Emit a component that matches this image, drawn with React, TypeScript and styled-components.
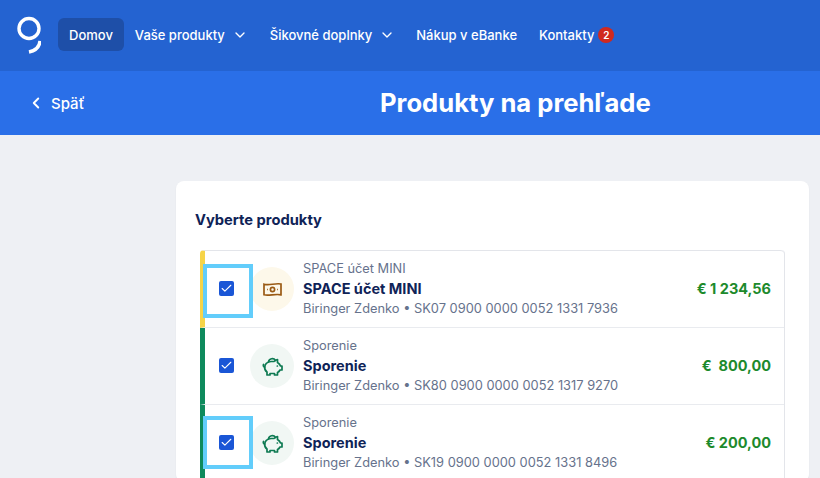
import React from 'react';
import styled, { createGlobalStyle } from 'styled-components';
import { Check, ChevronDown, ChevronLeft } from 'lucide-react';

const GlobalStyle = createGlobalStyle`
    html, body {
        margin: 0;
        padding: 0;
        background: #eef0f4;
        font-family: Inter, "Liberation Sans", sans-serif;
    }
`;

const Page = styled.div`
    width: 820px;
    height: 478px;
    overflow: hidden;
`;

const TopBar = styled.header`
    height: 71px;
    box-sizing: border-box;
    padding: 16px 0 0 17px;
    display: flex;
    align-items: flex-start;
    background: #2463d1;
`;

const Nav = styled.nav`
    display: flex;
    align-items: center;
    margin: 2px 0 0 17px;
`;

const NavItem = styled.a<{ $active?: boolean; $gap?: number }>`
    display: flex;
    align-items: center;
    height: 33px;
    padding: 0 11px;
    margin-right: ${({ $gap }) => $gap ?? 0}px;
    border-radius: 6px;
    font-size: 13px;
    font-weight: 500;
    color: #fff;
    white-space: nowrap;
    background: ${({ $active }) => ($active ? '#1e4fa8' : 'transparent')};
`;

const NavChevron = styled(ChevronDown)`
    margin-left: 7px;
    color: #fff;
`;

const Badge = styled.span`
    display: inline-flex;
    align-items: center;
    justify-content: center;
    width: 16px;
    height: 16px;
    margin-left: 4px;
    border-radius: 50%;
    background: #d0291f;
    color: #fff;
    font-size: 10px;
    font-weight: 600;
`;

const SubBar = styled.div`
    height: 64px;
    box-sizing: border-box;
    padding-left: 27px;
    display: flex;
    align-items: center;
    background: #2a6fe8;
    color: #fff;
`;

const BackLink = styled.a`
    display: flex;
    align-items: center;
    gap: 6px;
    width: 353px;
    font-size: 15px;
    font-weight: 500;
`;

const Title = styled.h1`
    margin: 0;
    font-size: 25.6px;
    line-height: 32px;
    font-weight: 700;
    white-space: nowrap;
`;

const Main = styled.main`
    padding: 46px 11px 0 176px;
`;

const Card = styled.section`
    padding: 30px 24px 0 19px;
    background: #fff;
    border-radius: 8px;
    box-shadow: 0 1px 2px rgba(20, 30, 60, 0.05);
`;

const CardTitle = styled.h2`
    margin: 0 0 21px;
    font-size: 14.7px;
    line-height: 18px;
    font-weight: 700;
    color: #0f2357;
`;

const List = styled.div`
    margin-left: 5px;
    border-right: 1px solid #e3e5ea;
    border-radius: 4px 4px 0 0;
`;

const Row = styled.div<{ $stripe: string }>`
    position: relative;
    display: flex;
    align-items: center;
    height: 77px;
    box-sizing: border-box;
    padding-right: 13px;
    border-left: 5px solid ${({ $stripe }) => $stripe};
    border-bottom: 1px solid #e9ebef;

    &:first-child {
        height: 78px;
        border-top: 1px solid #e3e5ea;
        border-radius: 4px 4px 0 0;
    }
`;

const CheckBox = styled.span`
    display: flex;
    align-items: center;
    justify-content: center;
    flex-shrink: 0;
    width: 15px;
    height: 15px;
    margin: 0 0 2px 14px;
    border-radius: 2px;
    background: #1a56d6;
    color: #fff;
`;

const Highlight = styled.span<{ $top: number; $height: number }>`
    position: absolute;
    left: -2px;
    top: ${({ $top }) => $top}px;
    width: 50px;
    height: ${({ $height }) => $height}px;
    box-sizing: border-box;
    border: 4px solid #62cdfb;
`;

const IconCircle = styled.span<{ $bg: string; $color: string }>`
    display: flex;
    align-items: center;
    justify-content: center;
    flex-shrink: 0;
    width: 44px;
    height: 44px;
    margin-left: 16px;
    border-radius: 50%;
    background: ${({ $bg }) => $bg};
    color: ${({ $color }) => $color};
`;

const Info = styled.div`
    flex: 1;
    min-width: 0;
    margin-left: 9px;
`;

const Kind = styled.div`
    font-size: 12.8px;
    line-height: 18px;
    color: #66728c;
`;

const Name = styled.div`
    font-size: 14.5px;
    line-height: 21px;
    font-weight: 700;
    color: #0f2357;
`;

const Account = styled.div`
    font-size: 12.85px;
    line-height: 19px;
    color: #66728c;
    white-space: nowrap;
`;

const Amount = styled.div`
    margin-bottom: 2px;
    font-size: 14.5px;
    font-weight: 700;
    color: #1d8a2c;
    white-space: pre;
`;

const LogoMark = () => (
    <svg width="24" height="38" viewBox="0 0 24 38" fill="none" stroke="#fff" strokeWidth="3.4">
        <circle cx="12" cy="12.5" r="10" />
        <path d="M23 25 C22.5 31 19 34.5 12 36" />
    </svg>
);

const BanknoteIcon = () => (
    <svg width="19" height="15" viewBox="0 0 19 15" fill="none" stroke="currentColor" strokeWidth="1.7">
        <path d="M1 2.2 C6 4 12 0.8 18 2 V12.8 C12 11.5 6 14.2 1 12.8 Z" />
        <circle cx="9.5" cy="7.5" r="2.1" />
        <path d="M4 7.5h.8M14.2 7.5h.8" />
    </svg>
);

const PiggyIcon = () => (
    <svg width="21" height="20" viewBox="0 0 21 20" fill="none" stroke="currentColor" strokeWidth="1.7" strokeLinejoin="round" strokeLinecap="round">
        <path d="M15.5 3.5 V6.5 C17 7.5 18 8.5 18.5 10 H20 V14 H18 C17.5 15 16.5 16 15.5 16.5 V19 H12.5 V17.5 H8 V19 H5 V16 C3.5 15 2.5 13 2.7 11 C2.9 8.5 5 6 9 5.5 H12 C13 4.5 14 3.8 15.5 3.5 Z" />
        <path d="M2.7 11 C1.5 10.8 1 9.5 1.5 8.5" />
        <path d="M6.5 5.8 A3.8 3.8 0 0 1 13.5 4.5" />
        <path d="M15.3 10h.1" />
    </svg>
);

const rows = [
    { kind: 'SPACE účet MINI', name: 'SPACE účet MINI', iban: 'SK07 0900 0000 0052 1331 7936', amount: '€ 1 234,56', stripe: '#f6d448', bg: '#fdf8ea', color: '#9a5a14', money: true, marker: { top: 13, height: 54 } },
    { kind: 'Sporenie', name: 'Sporenie', iban: 'SK80 0900 0000 0052 1317 9270', amount: '€  800,00', stripe: '#0e8a5c', bg: '#f1f7f4', color: '#0e7a52', money: false },
    { kind: 'Sporenie', name: 'Sporenie', iban: 'SK19 0900 0000 0052 1331 8496', amount: '€ 200,00', stripe: '#0e8a5c', bg: '#f1f7f4', color: '#0e7a52', money: false, marker: { top: 11, height: 53 } },
];

const App: React.FC = () => (
    <Page>
        <GlobalStyle />
        <TopBar>
            <LogoMark />
            <Nav>
                <NavItem $active>Domov</NavItem>
                <NavItem>Vaše produkty<NavChevron size={16} /></NavItem>
                <NavItem $gap={-1}>Šikovné doplnky<NavChevron size={16} /></NavItem>
                <NavItem>Nákup v eBanke</NavItem>
                <NavItem>Kontakty<Badge>2</Badge></NavItem>
            </Nav>
        </TopBar>
        <SubBar>
            <BackLink><ChevronLeft size={18} strokeWidth={2.5} />Späť</BackLink>
            <Title>Produkty na prehľade</Title>
        </SubBar>
        <Main>
            <Card>
                <CardTitle>Vyberte produkty</CardTitle>
                <List>
                    {rows.map((row) => (
                        <Row key={row.iban} $stripe={row.stripe}>
                            <CheckBox><Check size={13} strokeWidth={2} /></CheckBox>
                            {row.marker && <Highlight $top={row.marker.top} $height={row.marker.height} />}
                            <IconCircle $bg={row.bg} $color={row.color}>
                                {row.money ? <BanknoteIcon /> : <PiggyIcon />}
                            </IconCircle>
                            <Info>
                                <Kind>{row.kind}</Kind>
                                <Name>{row.name}</Name>
                                <Account>Biringer Zdenko • {row.iban}</Account>
                            </Info>
                            <Amount>{row.amount}</Amount>
                        </Row>
                    ))}
                </List>
            </Card>
        </Main>
    </Page>
);

export default App;
